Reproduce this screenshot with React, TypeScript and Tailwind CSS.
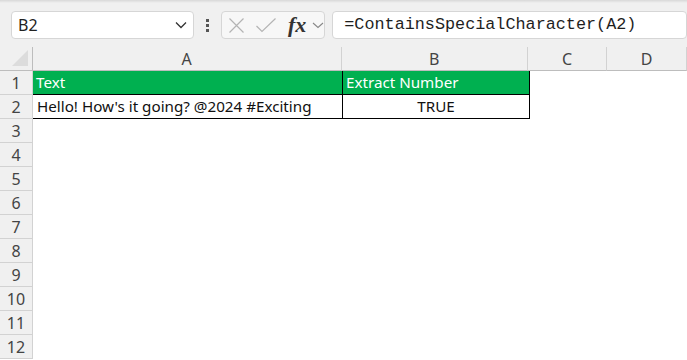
import React from 'react';

const ROWS = [3, 4, 5, 6, 7, 8, 9, 10, 11, 12];

const headerCell = 'flex items-center justify-center border-r border-b border-[#d2d2d2] bg-[#f0f0f0] text-[16px] text-[#444]';

export default function App() {
  return (
    <div className="w-[687px] h-[360px] overflow-hidden bg-white" style={{ fontFamily: '"Noto Sans", sans-serif' }}>
      {/* toolbar */}
      <div className="h-[47px] bg-[#f0f0f0] relative flex items-start pt-[11px] pl-[11px]">
        <div className="absolute top-0 left-0 right-0 h-[3px] bg-gradient-to-b from-[#d8d8d8] to-[#f0f0f0]" />
        <div className="w-[186px] h-[28px] bg-white border border-[#d6d6d6] rounded-[4px] flex items-center justify-between pl-[6px] pr-[6px]">
          <span className="text-[16px] text-[#222]">B2</span>
          <svg width="12" height="8" viewBox="0 0 12 8"><path d="M1 1.5 L6 6.5 L11 1.5" fill="none" stroke="#333" strokeWidth="1.3" /></svg>
        </div>
        <div className="w-[27px] h-[28px] flex flex-col items-center justify-center gap-[2px]">
          <div className="w-[3px] h-[3px] bg-[#555]" />
          <div className="w-[3px] h-[3px] bg-[#555]" />
          <div className="w-[3px] h-[3px] bg-[#555]" />
        </div>
        <div className="w-[105px] h-[28px] bg-[#f7f7f7] border border-[#d6d6d6] rounded-[4px] flex items-center pl-[6px]">
          <svg width="17" height="17" viewBox="0 0 17 17"><path d="M1.5 1.5 L15.5 15.5 M15.5 1.5 L1.5 15.5" stroke="#b4b4b4" strokeWidth="1.2" /></svg>
          <svg width="22" height="17" viewBox="0 0 22 17" className="ml-[10px]"><path d="M1.5 9 L7 14.5 L20.5 1.5" fill="none" stroke="#b4b4b4" strokeWidth="1.2" /></svg>
          <span className="ml-[11px] text-[22px] italic font-bold text-[#333] leading-none" style={{ fontFamily: '"Liberation Serif", serif' }}>fx</span>
          <svg width="12" height="7" viewBox="0 0 12 7" className="ml-[6px]"><path d="M1 1 L6 5.5 L11 1" fill="none" stroke="#888" strokeWidth="1.1" /></svg>
        </div>
        <div className="ml-[7px] w-[360px] h-[28px] bg-white border border-[#d6d6d6] rounded-[4px] flex items-center pl-[11px]">
          <span className="text-[16.8px] text-[#1e1e1e]" style={{ fontFamily: '"Liberation Mono", monospace' }}>=ContainsSpecialCharacter(A2)</span>
        </div>
      </div>

      {/* column headers */}
      <div className="flex h-[24px]">
        <div className="w-[33px] h-[24px] bg-[#f0f0f0] border-r border-b border-[#bdbdbd] flex items-end justify-end pr-[4px] pb-[4px]">
          <div className="w-0 h-0 border-l-[16px] border-l-transparent border-b-[16px] border-b-[#dcdcdc]" />
        </div>
        <div className={`${headerCell} w-[310px] border-b-[#bdbdbd]`}>A</div>
        <div className={`${headerCell} w-[187px] border-b-[#bdbdbd]`}>B</div>
        <div className={`${headerCell} w-[80px] border-b-[#bdbdbd]`}>C</div>
        <div className={`${headerCell} w-[80px] border-b-[#bdbdbd]`}>D</div>
      </div>

      {/* row 1 */}
      <div className="flex h-[24px]">
        <div className={`${headerCell} w-[33px] h-[24px]`}>1</div>
        <div className="w-[309px] h-[24px] bg-[#00b050] text-white text-[15.2px] flex items-center pl-[3px] border-b border-black">Text</div>
        <div className="w-[1px] h-[24px] bg-black" />
        <div className="w-[186px] h-[24px] bg-[#00b050] text-white text-[15.2px] flex items-center pl-[3px] border-b border-black">Extract Number</div>
        <div className="w-[1px] h-[24px] bg-black" />
      </div>

      {/* row 2 */}
      <div className="flex h-[24px]">
        <div className={`${headerCell} w-[33px] h-[24px]`}>2</div>
        <div className="w-[309px] h-[24px] text-[#111] text-[15.2px] flex items-center pl-[4px] border-b border-black">Hello! How's it going? @2024 #Exciting</div>
        <div className="w-[1px] h-[24px] bg-black" />
        <div className="w-[186px] h-[24px] text-[#111] text-[15.2px] flex items-center justify-center border-b border-black">TRUE</div>
        <div className="w-[1px] h-[24px] bg-black" />
      </div>

      {ROWS.map((r) => (
        <div key={r} className="flex h-[24px]">
          <div className={`${headerCell} w-[33px] h-[24px]`}>{r}</div>
        </div>
      ))}
    </div>
  );
}
